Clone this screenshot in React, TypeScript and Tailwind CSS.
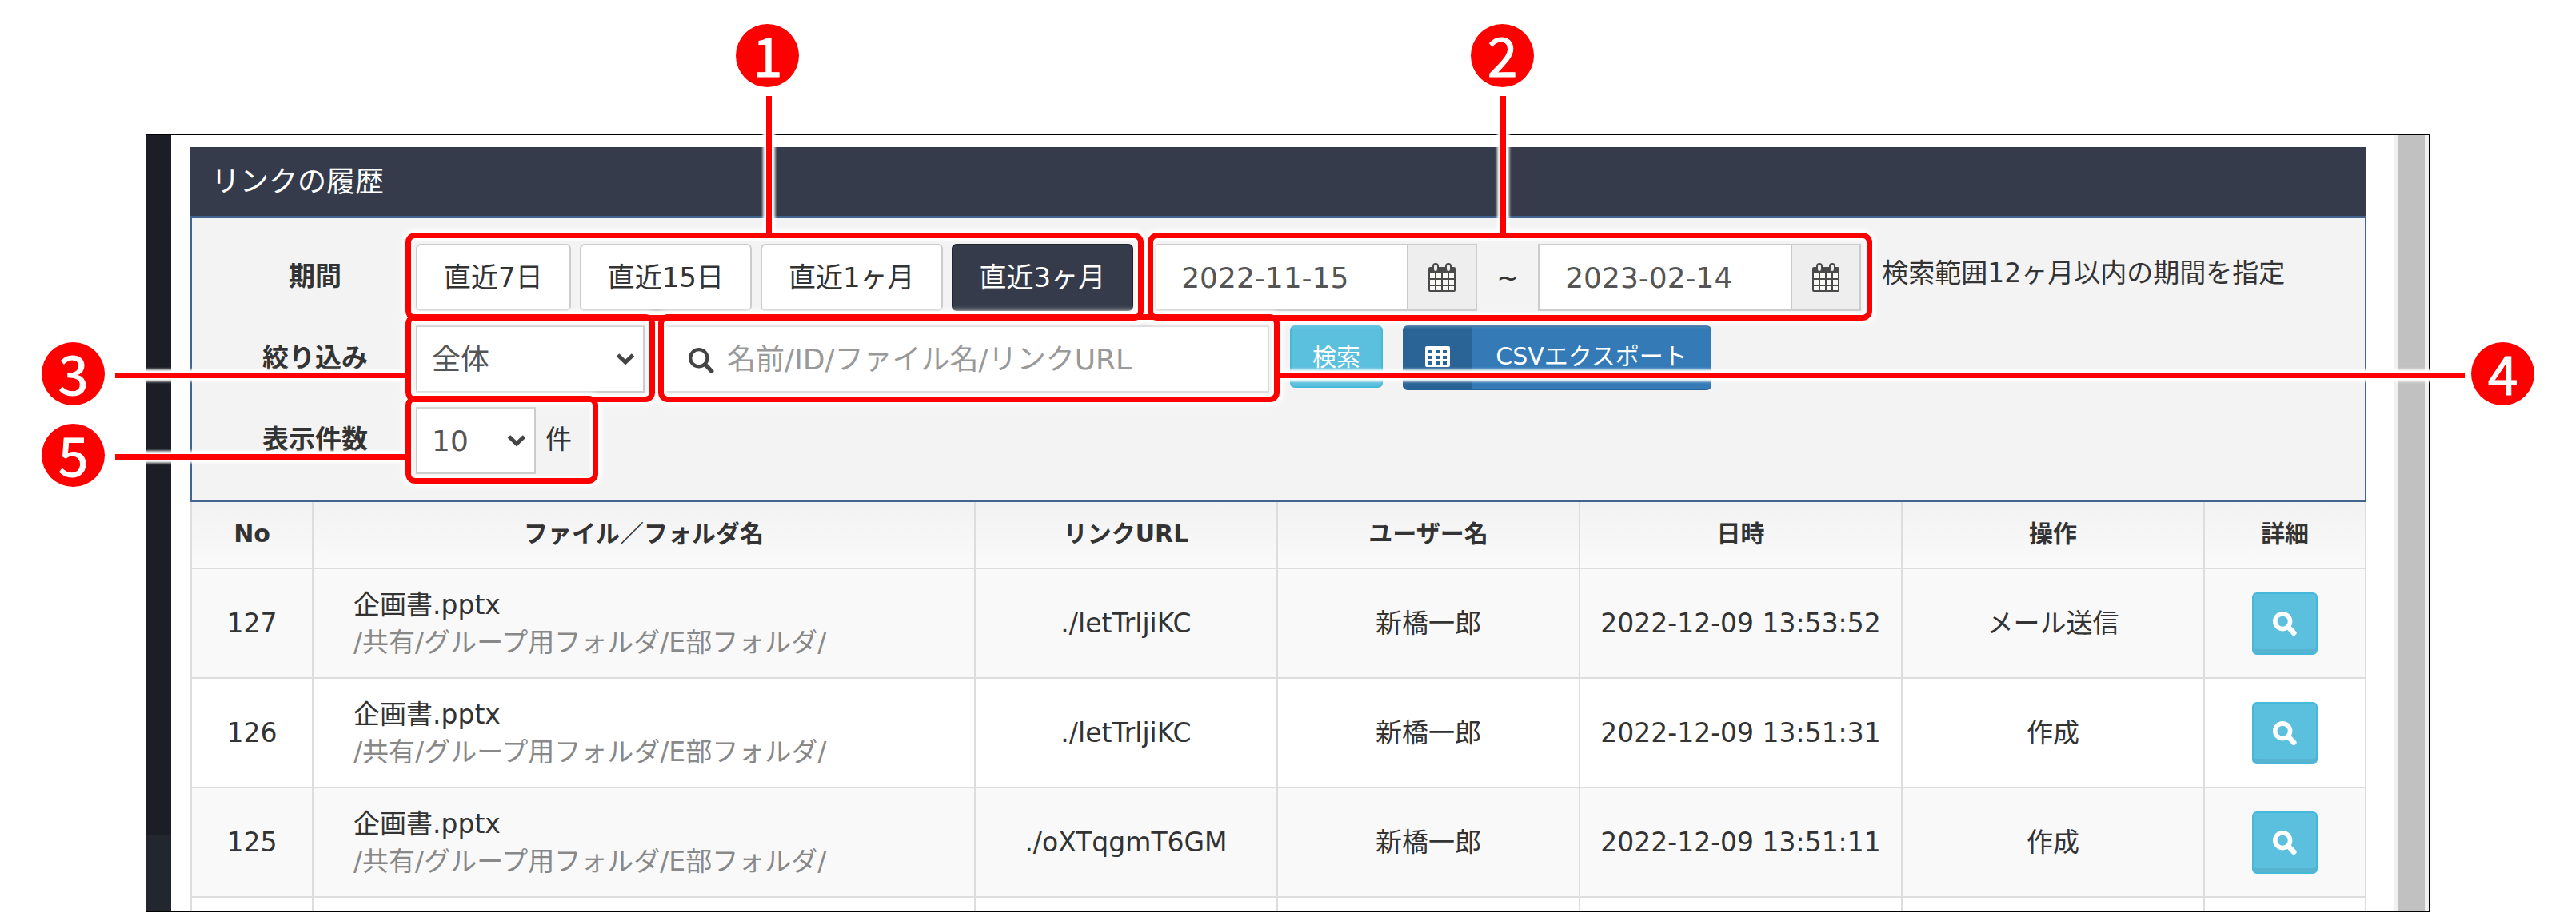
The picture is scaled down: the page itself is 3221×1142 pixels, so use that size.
import clsx from "clsx";
import { ReactNode, useState } from "react";

const PERIODS = ["直近7日", "直近15日", "直近1ヶ月", "直近3ヶ月"];

const ROWS = [
  { no: 127, name: "企画書.pptx", path: "/共有/グループ用フォルダ/E部フォルダ/", url: "./letTrljiKC", user: "新橋一郎", date: "2022-12-09 13:53:52", action: "メール送信" },
  { no: 126, name: "企画書.pptx", path: "/共有/グループ用フォルダ/E部フォルダ/", url: "./letTrljiKC", user: "新橋一郎", date: "2022-12-09 13:51:31", action: "作成" },
  { no: 125, name: "企画書.pptx", path: "/共有/グループ用フォルダ/E部フォルダ/", url: "./oXTqgmT6GM", user: "新橋一郎", date: "2022-12-09 13:51:11", action: "作成" }
];

const HEADERS = ["No", "ファイル／フォルダ名", "リンクURL", "ユーザー名", "日時", "操作", "詳細"];

function SearchIcon({ className, weight = 4 }: { className?: string; weight?: number }) {
  return (
    <svg viewBox="0 0 32 32" fill="none" stroke="currentColor" className={className} aria-hidden="true">
      <circle cx="13" cy="13" r="10" strokeWidth={weight} />
      <path d="M20.5 20.5 28 28.5" strokeWidth={weight + 1} strokeLinecap="round" />
    </svg>
  );
}

function CalendarIcon() {
  return (
    <svg viewBox="0 0 34 36" className="h-9 w-[34px]" aria-hidden="true">
      <rect x="0" y="5" width="34" height="31" rx="2" fill="#4a4a4a" />
      <g fill="#f8f8f4">
        {[13, 21, 29].map(y =>
          [2, 10, 18, 26].map(x => <rect key={`${x}-${y}`} x={x} y={y} width="6" height={y === 29 ? 5 : 6} />)
        )}
      </g>
      <rect x="6" y="1" width="6" height="10" rx="3" fill="#eee" stroke="#4a4a4a" strokeWidth="2" />
      <rect x="22" y="1" width="6" height="10" rx="3" fill="#eee" stroke="#4a4a4a" strokeWidth="2" />
    </svg>
  );
}

function TableIcon() {
  return (
    <svg viewBox="0 0 31 26" className="h-[26px] w-[31px]" aria-hidden="true">
      <rect width="31" height="26" rx="2" fill="#fff" />
      <g fill="#2a6496">
        {[5, 12, 19].map(y => [4, 13, 22].map(x => <rect key={`${x}-${y}`} x={x} y={y} width="5" height="4" />))}
      </g>
    </svg>
  );
}

function Chevron() {
  return (
    <svg
      viewBox="0 0 24 16"
      fill="none"
      stroke="#444"
      strokeWidth="5"
      className="pointer-events-none absolute top-1/2 right-3 h-4 w-6 -translate-y-1/2"
      aria-hidden="true"
    >
      <path d="M2.5 3 12 12 21.5 3" />
    </svg>
  );
}

function Callout({ n, ring, line, badge }: { n: number; ring: string; line: string; badge: string }) {
  return (
    <div className={clsx("pointer-events-none absolute -top-[14px] -bottom-[12px]", ring)}>
      <span className="absolute inset-0 z-10 rounded-xl border-[7px] border-white shadow-[0_0_6px_4px_#fff,inset_0_0_3px_3px_#fff]" />
      <span className={clsx("absolute z-10 bg-white shadow-[0_0_3px_4px_#fff]", line)} />
      <span className="absolute inset-0 z-20 rounded-xl border-[7px] border-[#f00]" />
      <span className={clsx("absolute z-20 bg-[#f00]", line)} />
      <span
        className={clsx(
          "absolute z-20 flex size-[79px] items-center justify-center rounded-full bg-[#f00] pb-[6px] font-['Noto_Sans_CJK_JP',sans-serif] text-[68px] leading-none text-white [-webkit-text-stroke:1px_#fff]",
          badge
        )}
      >
        {n}
      </span>
    </div>
  );
}

function FormRow({ label, htmlFor, children }: { label: string; htmlFor: string; children: ReactNode }) {
  return (
    <div className="flex h-[84px] items-center">
      <label htmlFor={htmlFor} className="w-[280px] shrink-0 pb-1 pl-7 text-center font-bold">
        {label}
      </label>
      {children}
    </div>
  );
}

function DateField({ id, label, value, onChange }: { id: string; label: string; value: string; onChange: (v: string) => void }) {
  return (
    <div className="flex h-[84px] w-[404px] border-2 border-[#ccc]">
      <input
        id={id}
        aria-label={label}
        value={value}
        onChange={event => onChange(event.target.value)}
        className="w-full min-w-0 flex-1 bg-white pl-8 text-[36px] text-[#555] outline-none"
      />
      <button type="button" aria-label={`${label}を選択`} className="flex w-[86px] items-center justify-center border-l-2 border-[#ccc] bg-[#eee]">
        <CalendarIcon />
      </button>
    </div>
  );
}

export default function App() {
  const [period, setPeriod] = useState("直近3ヶ月");
  const [from, setFrom] = useState("2022-11-15");
  const [to, setTo] = useState("2023-02-14");
  const [keyword, setKeyword] = useState("");

  return (
    <div className="bg-white px-[183px] pt-[168px] font-['DejaVu_Sans','Noto_Sans_CJK_JP',sans-serif] text-[33px] leading-[47px] text-[#333]">
      <div className="flex border border-l-0 border-black">
        <div className="flex w-[31px] shrink-0 flex-col bg-[#1b1e25]">
          <div className="mt-auto h-[95px] bg-[#22262f]" />
        </div>

        <main className="min-w-0 flex-1 pt-[15px] pr-[35px] pl-6">
          <h1 className="flex h-[86px] items-center bg-[#353b4a] pl-[26px] text-[36px] text-white">リンクの履歴</h1>

          <form
            onSubmit={event => event.preventDefault()}
            className="flex flex-col gap-[18px] border-x-2 border-y-[3px] border-[#41658f] bg-[#f3f3f3] py-8"
          >
            <FormRow label="期間" htmlFor="from">
              <div className="relative flex gap-[11px]">
                {PERIODS.map(item => (
                  <button
                    key={item}
                    type="button"
                    onClick={() => setPeriod(item)}
                    className={clsx(
                      "h-[84px] rounded-md border-2 px-[33px] text-[34px] whitespace-nowrap",
                      item === period ? "border-[#22252c] bg-[#353b4a] text-white" : "border-[#ccc] bg-white"
                    )}
                  >
                    {item}
                  </button>
                ))}
                <Callout
                  n={1}
                  ring="-left-[13px] -right-[13px]"
                  line="bottom-full left-[451px] h-[171px] w-[7px]"
                  badge="bottom-[calc(100%+182px)] left-[413px]"
                />
              </div>
              <div className="relative ml-[26px] flex items-center">
                <DateField id="from" label="開始日" value={from} onChange={setFrom} />
                <span className="w-[76px] text-center">~</span>
                <DateField id="to" label="終了日" value={to} onChange={setTo} />
                <Callout
                  n={2}
                  ring="-left-[8px] -right-[14px]"
                  line="bottom-full left-[441px] h-[171px] w-[7px]"
                  badge="bottom-[calc(100%+182px)] left-[404px]"
                />
              </div>
              <span className="ml-[26px] pb-3 whitespace-nowrap">検索範囲12ヶ月以内の期間を指定</span>
            </FormRow>

            <FormRow label="絞り込み" htmlFor="target">
              <div className="relative w-[286px]">
                <select id="target" className="h-[84px] w-full appearance-none border-2 border-[#ccc] bg-white pl-[18px] text-[36px] text-[#555]">
                  <option>全体</option>
                </select>
                <Chevron />
                <Callout
                  n={3}
                  ring="-left-[13px] -right-[13px]"
                  line="right-full top-[73px] h-[7px] w-[363px]"
                  badge="right-[calc(100%+376px)] top-[35px]"
                />
              </div>
              <div className="relative ml-[23px] w-[758px]">
                <SearchIcon className="absolute top-[27px] left-[31px] size-[34px] text-[#444]" />
                <input
                  aria-label="キーワード"
                  value={keyword}
                  onChange={event => setKeyword(event.target.value)}
                  placeholder="名前/ID/ファイル名/リンクURL"
                  className="h-[84px] w-full border-2 border-[#ddd] bg-white pl-[78px] text-[36px] outline-none placeholder:text-[#999]"
                />
                <Callout
                  n={4}
                  ring="-left-[6px] -right-[13px]"
                  line="left-full top-[73px] h-[7px] w-[1482px]"
                  badge="left-[calc(100%+1490px)] top-[35px]"
                />
              </div>
              <button
                type="submit"
                className="ml-[26px] h-[78px] w-[116px] self-start rounded-md border-2 border-[#46b8da] bg-[#5bc0de] text-[30px] text-white"
              >
                検索
              </button>
              <button
                type="button"
                className="ml-[25px] flex h-[81px] w-[386px] self-start overflow-hidden rounded-md border-y-2 border-[#2a6496] bg-[#337ab7] text-[30px] text-white"
              >
                <span className="flex h-full w-[86px] items-center justify-center bg-[#2a6496] pb-1">
                  <TableIcon />
                </span>
                <span className="flex h-full flex-1 items-center justify-center pb-1">CSVエクスポート</span>
              </button>
            </FormRow>

            <FormRow label="表示件数" htmlFor="count">
              <div className="relative flex items-center gap-3 pr-5">
                <div className="relative w-[150px]">
                  <select id="count" className="h-[84px] w-full appearance-none border-2 border-[#ccc] bg-white pl-[18px] text-[36px] text-[#555]">
                    <option>10</option>
                  </select>
                  <Chevron />
                </div>
                <span className="pb-1">件</span>
                <Callout
                  n={5}
                  ring="-left-[13px] -right-[13px]"
                  line="right-full top-[73px] h-[7px] w-[363px]"
                  badge="right-[calc(100%+376px)] top-[35px]"
                />
              </div>
            </FormRow>
          </form>

          <table className="w-full table-fixed border-separate border-spacing-0 border-l-2 border-[#ddd] text-center">
            <colgroup>
              <col className="w-[152px]" />
              <col />
              <col className="w-[378px]" />
              <col className="w-[378px]" />
              <col className="w-[403px]" />
              <col className="w-[378px]" />
              <col className="w-[202px]" />
            </colgroup>
            <thead>
              <tr>
                {HEADERS.map(header => (
                  <th
                    key={header}
                    className="h-[84px] border-r-2 border-b-2 border-[#ddd] bg-linear-to-b from-[#f2f2f2] to-[#fafafa] pb-1 text-[30px] font-bold"
                  >
                    {header}
                  </th>
                ))}
              </tr>
            </thead>
            <tbody className="[&_td]:border-r-2 [&_td]:border-[#ddd]">
              {ROWS.map(row => (
                <tr key={row.no} className="odd:bg-[#f9f9f9] [&>td]:h-[137px] [&>td]:border-b-2">
                  <td>{row.no}</td>
                  <td className="pl-[50px] text-left">
                    <div>{row.name}</div>
                    <div className="text-[#888]">{row.path}</div>
                  </td>
                  <td>{row.url}</td>
                  <td>{row.user}</td>
                  <td className="whitespace-nowrap">{row.date}</td>
                  <td>{row.action}</td>
                  <td>
                    <button
                      type="button"
                      aria-label="詳細"
                      className="mx-auto flex h-[78px] w-[82px] items-center justify-center rounded-md border-2 border-[#46b8da] bg-[#5bc0de] text-white shadow-[inset_0_-5px_0_#56b4d0]"
                    >
                      <SearchIcon className="size-[30px]" weight={6} />
                    </button>
                  </td>
                </tr>
              ))}
              <tr>
                {HEADERS.map(header => (
                  <td key={header} className="h-[17px]" />
                ))}
              </tr>
            </tbody>
          </table>
        </main>

        <div className="flex w-[43px] shrink-0 bg-[#f1f1f1] px-[5px]">
          <div className="flex-1 bg-[#c1c1c1]" />
        </div>
      </div>
    </div>
  );
}
